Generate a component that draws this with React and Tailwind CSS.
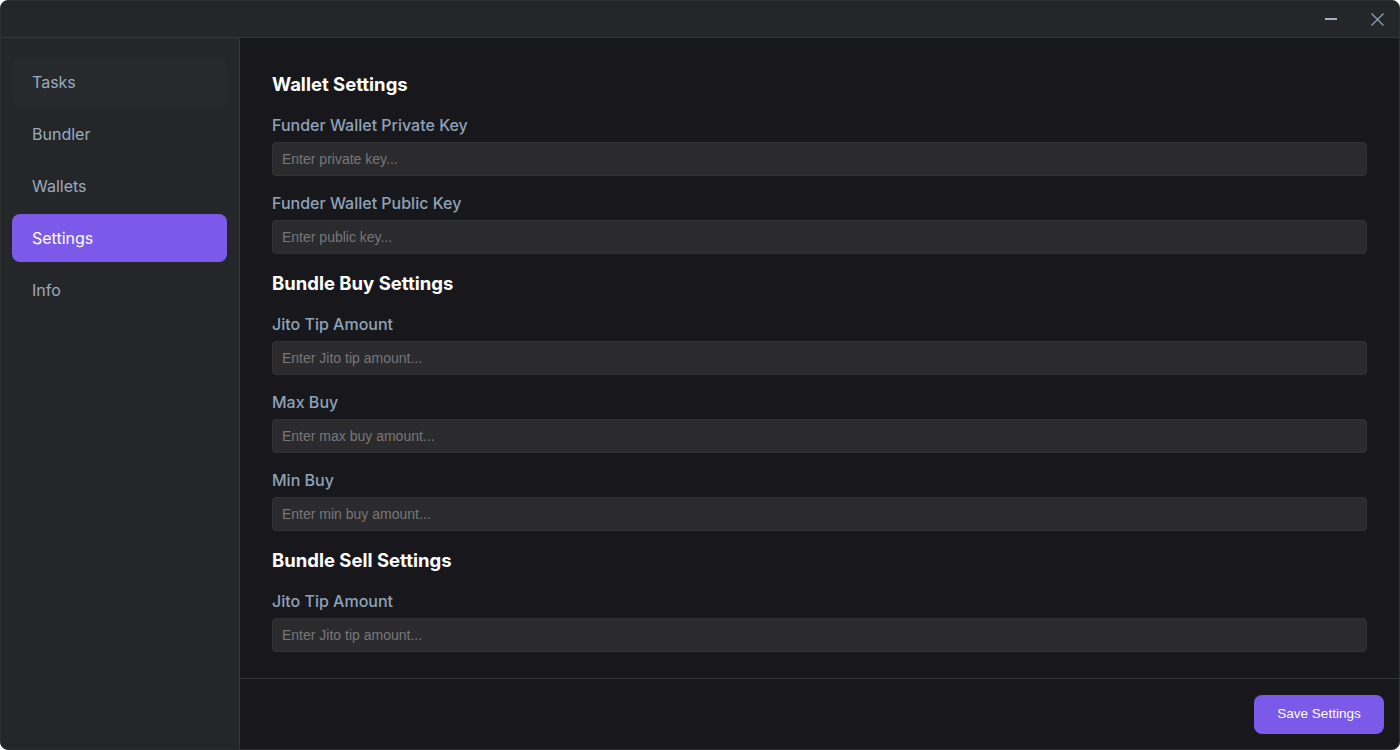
import React from "react";

const navItems = ["Tasks", "Bundler", "Wallets", "Settings", "Info"];

function Field({ label, placeholder }) {
  return (
    <div className="flex flex-col">
      <label className="text-[16px] leading-[24px] font-medium text-[#8ea2b8] mb-[5px]">{label}</label>
      <input
        placeholder={placeholder}
        className="h-[34px] w-full rounded-[4px] border border-[#323236] bg-[#2b2b2d] px-[9px] text-[14px] text-[#d0d0d0] placeholder:text-[#777779] outline-none"
        style={{ fontFamily: '"Liberation Sans", Arial, sans-serif' }}
      />
    </div>
  );
}

function Heading({ children }) {
  return <h2 className="text-[18.5px] leading-[28px] font-bold text-white">{children}</h2>;
}

export default function App() {
  return (
    <div className="w-[1400px] h-[750px] bg-white" style={{ fontFamily: 'Inter, "Noto Sans", sans-serif' }}>
      <div className="w-full h-full rounded-[8px] overflow-hidden border border-[#2e2f33] bg-[#18181c] flex flex-col">
        {/* Title bar */}
        <div className="h-[37px] shrink-0 bg-[#25262a] border-b border-[#35363a] flex items-center justify-end">
          <button className="w-[46px] h-full flex items-center justify-center">
            <svg width="12" height="12" viewBox="0 0 12 12">
              <rect x="0" y="5" width="12" height="2" fill="#a3b1c4" />
            </svg>
          </button>
          <button className="w-[46px] h-full flex items-center justify-center mr-[-1px]">
            <svg width="13" height="13" viewBox="0 0 13 13">
              <path d="M0.5 0.5 L12.5 12.5 M12.5 0.5 L0.5 12.5" stroke="#8ea2b8" strokeWidth="1.2" />
            </svg>
          </button>
        </div>
        <div className="flex flex-1 min-h-0">
          {/* Sidebar */}
          <div className="w-[239px] shrink-0 bg-[#25262a] border-r border-[#35363a] pl-[11px] pr-[12px] pt-[20px] flex flex-col gap-[4px]">
            {navItems.map((item) => {
              const active = item === "Settings";
              const hover = item === "Tasks";
              return (
                <div
                  key={item}
                  className={
                    "h-[48px] rounded-[8px] pl-[20px] flex items-center text-[16px] " +
                    (active
                      ? "bg-[#7b5ae9] text-white"
                      : hover
                      ? "bg-[#28292d] text-[#9aabbd]"
                      : "text-[#9aabbd]")
                  }
                >
                  {item}
                </div>
              );
            })}
          </div>
          {/* Content */}
          <div className="flex-1 flex flex-col min-w-0">
            <div className="flex-1 px-8 pt-[32px] flex flex-col gap-[15px] overflow-hidden">
              <Heading>Wallet Settings</Heading>
              <Field label="Funder Wallet Private Key" placeholder="Enter private key..." />
              <Field label="Funder Wallet Public Key" placeholder="Enter public key..." />
              <Heading>Bundle Buy Settings</Heading>
              <Field label="Jito Tip Amount" placeholder="Enter Jito tip amount..." />
              <Field label="Max Buy" placeholder="Enter max buy amount..." />
              <Field label="Min Buy" placeholder="Enter min buy amount..." />
              <Heading>Bundle Sell Settings</Heading>
              <Field label="Jito Tip Amount" placeholder="Enter Jito tip amount..." />
            </div>
            <div className="h-[71px] shrink-0 border-t border-[#35363a] flex items-start justify-end pt-[16px] pr-[15px]">
              <button
                className="w-[130px] h-[39px] rounded-[8px] bg-[#7b5ae9] text-white text-[13.5px]"
                style={{ fontFamily: '"Liberation Sans", Arial, sans-serif' }}
              >
                Save Settings
              </button>
            </div>
          </div>
        </div>
      </div>
    </div>
  );
}
